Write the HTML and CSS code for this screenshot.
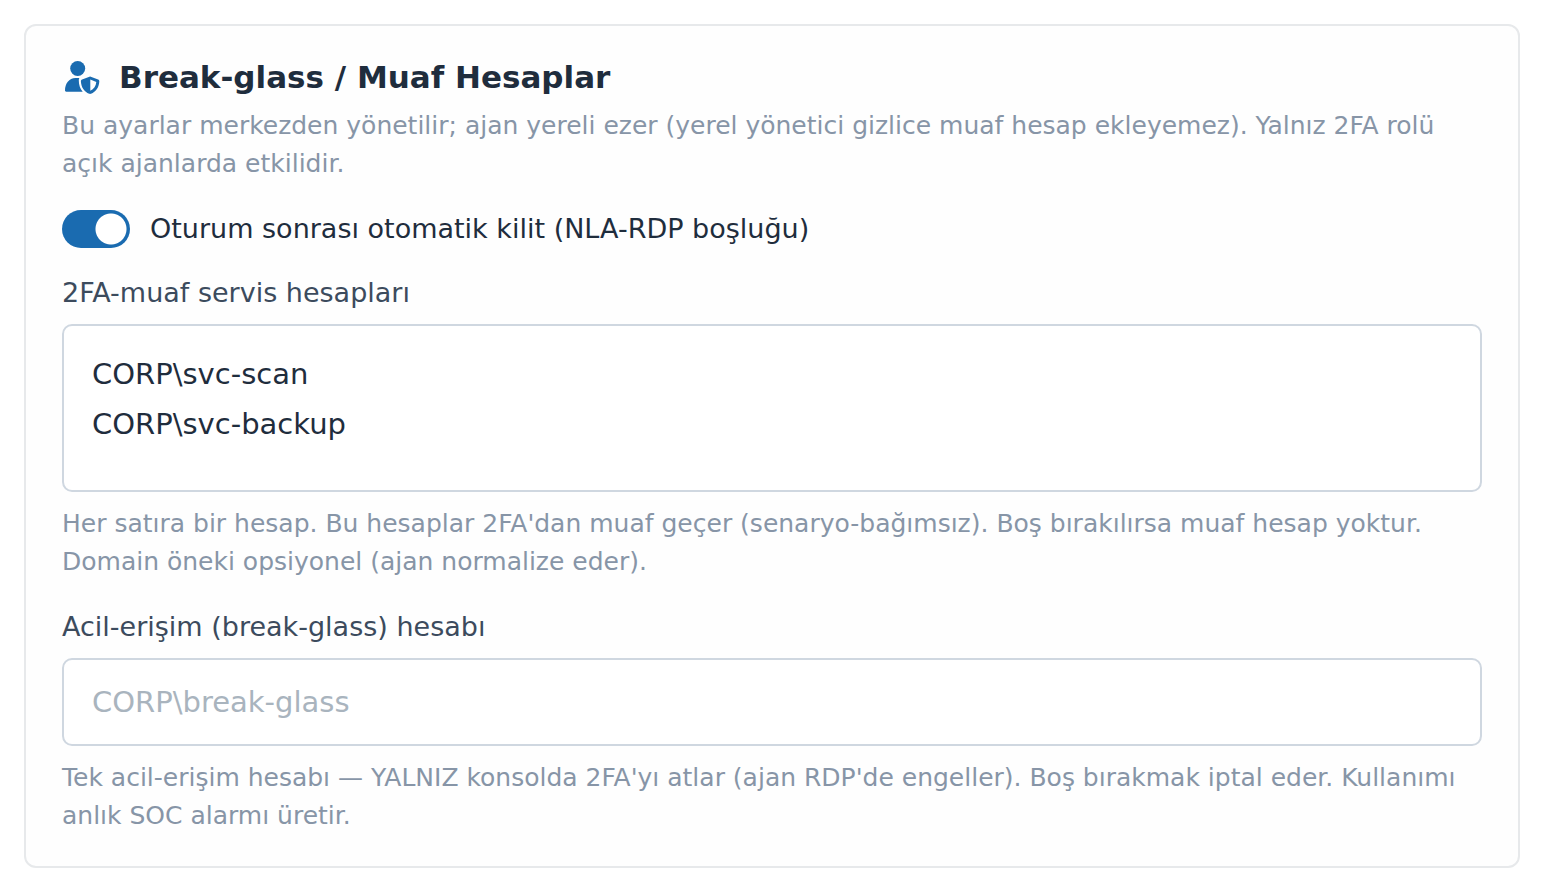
FILE: index.html
```html
<!DOCTYPE html>
<html lang="tr">
<head>
    <meta charset="UTF-8">
    <meta name="viewport" content="width=device-width, initial-scale=1.0">
    <title>Break-glass / Muaf Hesaplar</title>
    <link rel="stylesheet" href="styles.css">
</head>
<body>
    <section class="card">
        <h2 class="card-title">
            <svg class="title-icon" viewBox="0 0 38 36" aria-hidden="true">
                <circle cx="15.700" cy="9.500" r="7.500"/>
                <path d="M3 31.500C3 24.500 7 18.900 13.500 18.900H17.400C16.900 19.600 16.800 20.300 16.800 21.300c0 4.600 1.200 8.400 3.900 11.400H4.300C3.500 32.700 3 32.200 3 31.500z"/>
                <path fill-rule="evenodd" d="M28.100 17.500l8 3.100c.8.300 1.300 1 1.200 1.900-.3 5.800-3.300 10.300-8.300 12.300-.6.200-1.200.2-1.800 0-5-2-8-6.500-8.300-12.300-.1-.9.400-1.600 1.200-1.900zM28.300 20.600v11.200c3.600-1.700 5.700-4.600 6-8.700z"/>
            </svg>
            Break-glass / Muaf Hesaplar
        </h2>
        <p class="hint">Bu ayarlar merkezden yönetilir; ajan yereli ezer (yerel yönetici gizlice muaf hesap ekleyemez). Yalnız 2FA rolü açık ajanlarda etkilidir.</p>

        <label class="switch">
            <input type="checkbox" class="switch-input" checked>
            Oturum sonrası otomatik kilit (NLA-RDP boşluğu)
        </label>

        <div class="form-group">
            <label class="form-label" for="exemptAccounts">2FA-muaf servis hesapları</label>
            <textarea id="exemptAccounts" class="form-control" rows="2" spellcheck="false">CORP\svc-scan
CORP\svc-backup</textarea>
            <p class="hint">Her satıra bir hesap. Bu hesaplar 2FA'dan muaf geçer (senaryo-bağımsız). Boş bırakılırsa muaf hesap yoktur. Domain öneki opsiyonel (ajan normalize eder).</p>
        </div>

        <div class="form-group">
            <label class="form-label" for="breakGlass">Acil-erişim (break-glass) hesabı</label>
            <input type="text" id="breakGlass" class="form-control" placeholder="CORP\break-glass">
            <p class="hint">Tek acil-erişim hesabı — YALNIZ konsolda 2FA'yı atlar (ajan RDP'de engeller). Boş bırakmak iptal eder. Kullanımı anlık SOC alarmı üretir.</p>
        </div>
    </section>
</body>
</html>
```
FILE: styles.css
```css
* {
    box-sizing: border-box;
}
body {
    margin: 0;
    padding: 24px;
    background-color: #fff;
    color: #1f2d3d;
    font-family: "DejaVu Sans", sans-serif;
}
.card {
    padding: 32px 36px 31px;
    border: 2px solid #e7e9eb;
    border-radius: 12px;
    background-color: #fefefe;
}
.card-title {
    display: flex;
    align-items: center;
    gap: 19px;
    margin: 0 0 11px;
    font-size: 31px;
    line-height: 38px;
}
.title-icon {
    width: 38px;
    height: 36px;
    fill: #1a6bb0;
}
.hint {
    margin: 0;
    color: #8795a7;
    font-size: 25px;
    line-height: 38px;
}
.switch {
    display: flex;
    align-items: center;
    gap: 20px;
    margin: 26px 0 24px;
    font-size: 27px;
    line-height: 40px;
}
.switch-input {
    appearance: none;
    width: 68px;
    height: 38px;
    margin: 0;
    border-radius: 19px;
    background: radial-gradient(circle at 49px 19px, #fff 15px, #1a6bb0 16px);
}
.form-group {
    margin-bottom: 26px;
}
.form-group:last-child {
    margin-bottom: 0;
}
.form-label {
    display: block;
    margin-bottom: 11px;
    color: #3c4b5d;
    font-size: 27px;
    line-height: 40px;
}
.form-control {
    display: block;
    width: 100%;
    margin-bottom: 13px;
    padding: 17px 28px;
    border: 2px solid #cfd7e0;
    border-radius: 10px;
    background-color: #fff;
    color: #1f2d3d;
    font-family: inherit;
    font-size: 29px;
    line-height: 50px;
}
textarea.form-control {
    height: 168px;
    padding: 23px 28px;
    resize: none;
}
.form-control::placeholder {
    color: #a9b4be;
    opacity: 1;
}
```
